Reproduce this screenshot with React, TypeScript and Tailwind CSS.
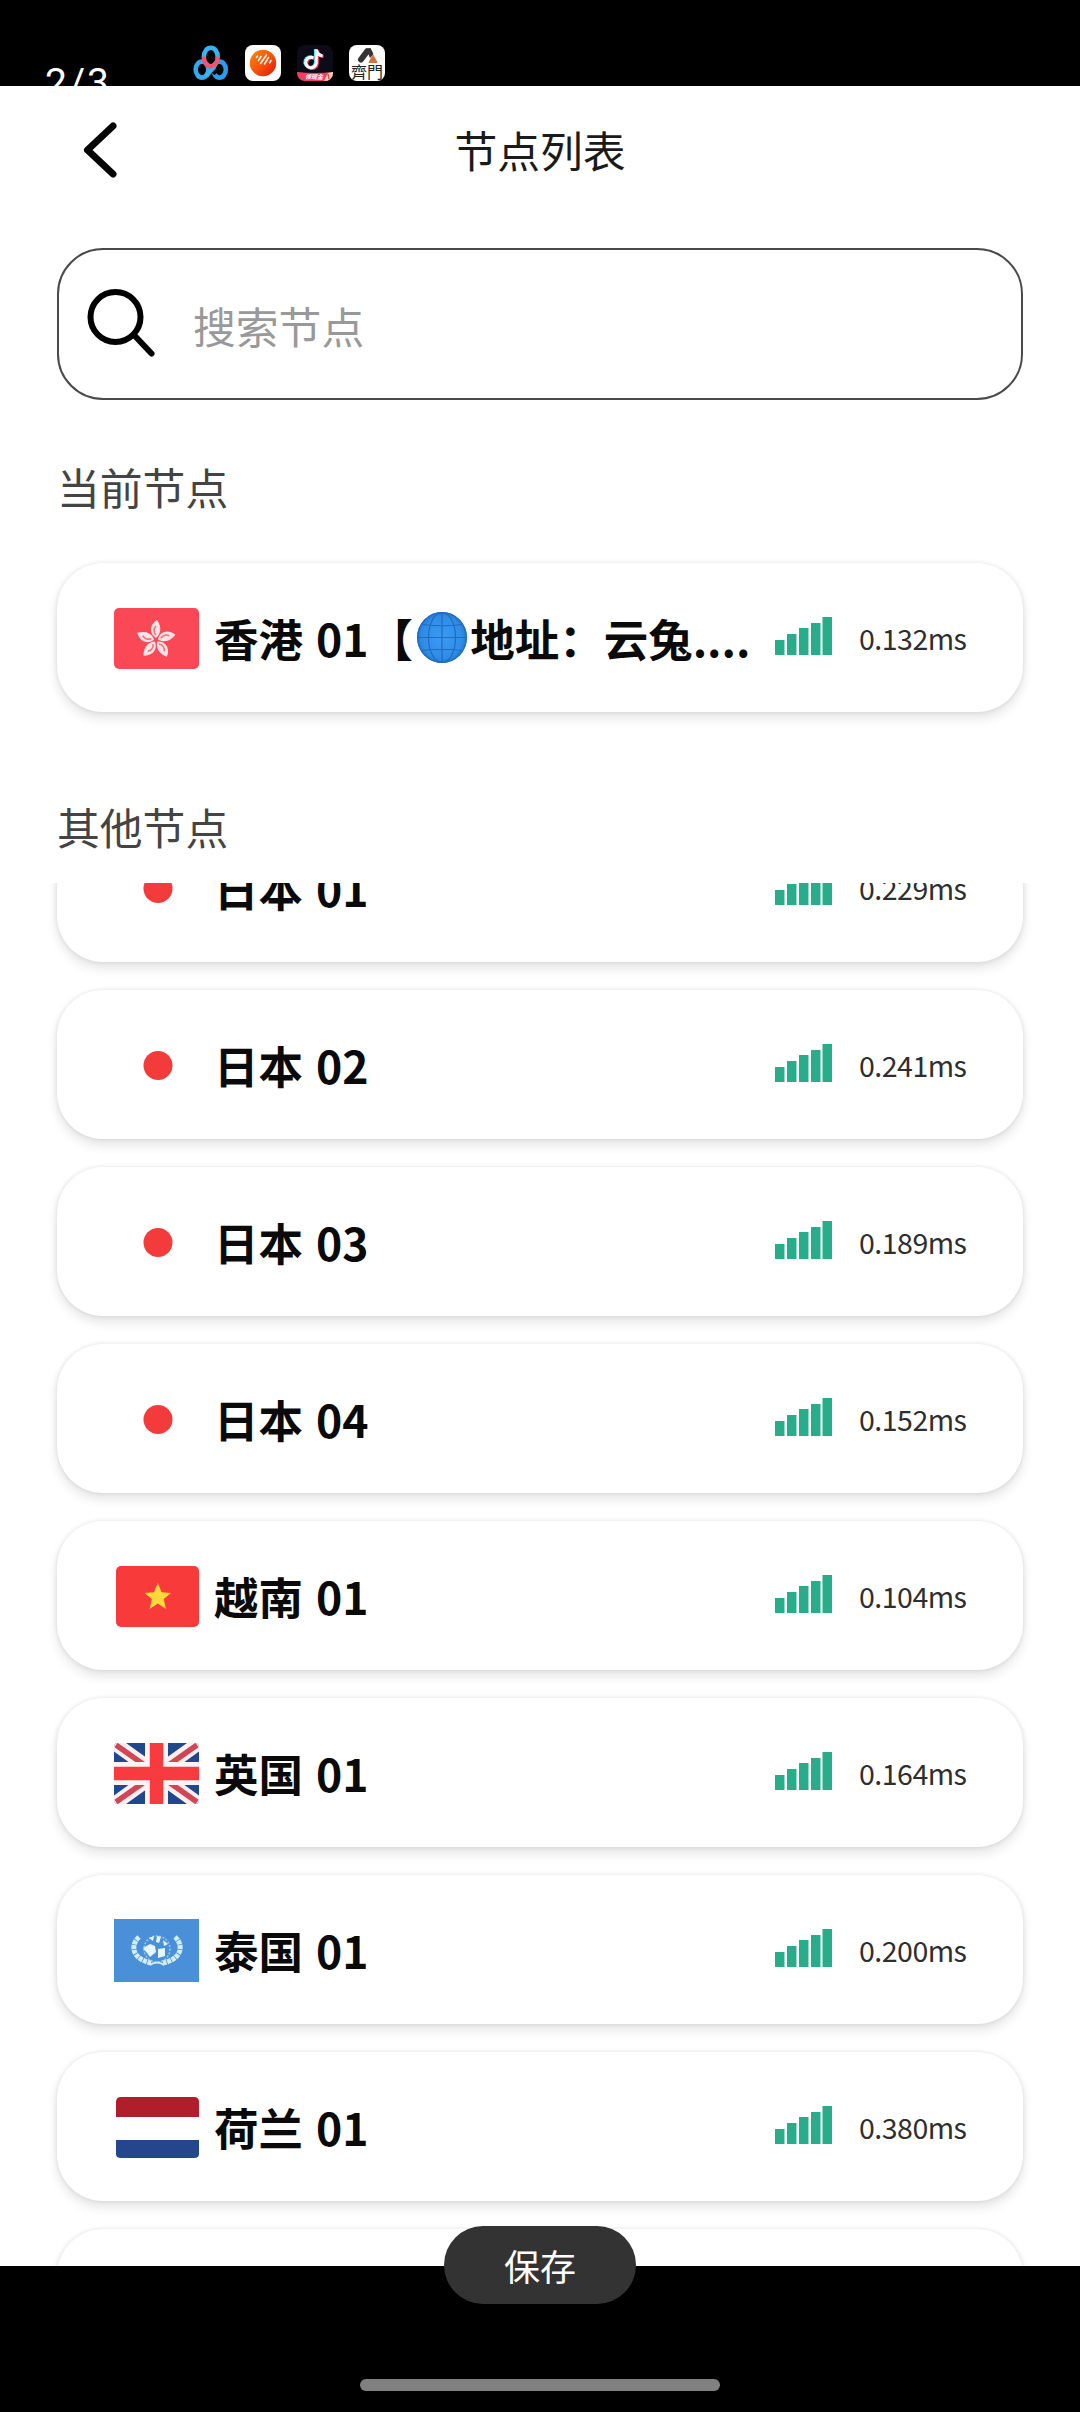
import type { ReactNode } from "react";

const HongKongFlag = () => (
  <svg viewBox="0 0 85 61" className="h-[61px] w-[85px]">
    <rect width="85" height="61" rx="5" fill="#fb4857" />
    {[0, 72, 144, 216, 288].map((a) => (
      <g key={a} transform={`translate(42 32) rotate(${a})`}>
        <path d="M0 -2C-7 -6 -7 -15 1 -20C4 -16 7 -8 0 -2Z" fill="#fde3e6" />
        <path d="M0 -5C-3 -8 -2 -12 0 -14" fill="none" stroke="#f2707c" strokeWidth="1.6" />
      </g>
    ))}
  </svg>
);

const JapanFlag = () => (
  <svg viewBox="0 0 85 61" className="h-[61px] w-[85px]">
    <circle cx="44" cy="30.5" r="14.5" fill="#f23b3a" />
  </svg>
);

const VietnamFlag = () => (
  <svg viewBox="0 0 85 61" className="h-[61px] w-[85px]">
    <rect x="2" width="83" height="61" rx="5" fill="#f93a3b" />
    <path
      d="M43.800 17L47.600 26.200L57 27L49.700 33L52 43L43.800 37.600L35.600 43L37.900 33L30.600 27L40 26.200Z"
      fill="#ffd93b"
    />
  </svg>
);

const UKFlag = () => (
  <svg viewBox="0 0 85 61" className="h-[61px] w-[85px]">
    <clipPath id="uk">
      <rect width="85" height="61" rx="4" />
    </clipPath>
    <g clipPath="url(#uk)">
      <rect width="85" height="61" fill="#21478c" />
      <path d="M0 0L85 61M85 0L0 61" stroke="#fdeef2" strokeWidth="14" />
      <path d="M2 2L36 26M83 2L49 26M2 59L36 35M83 59L49 35" stroke="#cf4654" strokeWidth="5.500" />
      <path d="M42.500 0V61M0 30.500H85" stroke="#fdf3f5" strokeWidth="23" />
      <path d="M42.500 0V61M0 30.500H85" stroke="#f83b3e" strokeWidth="13.500" />
    </g>
  </svg>
);

const UNFlag = () => (
  <svg viewBox="0 0 85 63" className="h-[63px] w-[85px]">
    <rect width="85" height="63" fill="#4a90d9" />
    <g fill="none" stroke="#d3ecf6">
      <path d="M25 18C16 26 18 40 37 44" strokeWidth="5" strokeDasharray="4 .8" />
      <path d="M61 18C70 26 68 40 49 44" strokeWidth="5" strokeDasharray="4 .8" />
      <path d="M36 46Q43 41 50 46" strokeWidth="2" />
      <circle cx="43" cy="30" r="13" strokeWidth="1.500" strokeDasharray="2 1.500" opacity=".6" />
    </g>
    <path
      d="M29 29L36 25L41 27L42 33L36 38L33 34ZM44 30L51 29L51 37L44 39ZM35 19L40 17L39 22ZM43 17L47 18L45 24L42 23ZM49 21L54 25L50 27Z"
      fill="#e6f6fa"
    />
  </svg>
);

const NetherlandsFlag = () => (
  <svg viewBox="0 0 85 61" className="h-[61px] w-[85px]">
    <path d="M2 20V5Q2 0 7 0H80Q85 0 85 5V20Z" fill="#b01e2b" />
    <path d="M2 43H85V57Q85 61 80 61H7Q2 61 2 57Z" fill="#23468c" />
  </svg>
);

const Globe = () => (
  <svg viewBox="0 0 50 51" className="h-[51px] w-[50px] shrink-0">
    <defs>
      <radialGradient id="globe">
        <stop offset="0" stopColor="#3a9af5" />
        <stop offset=".8" stopColor="#2f8de8" />
        <stop offset="1" stopColor="#2479cf" />
      </radialGradient>
    </defs>
    <ellipse cx="25" cy="25.500" rx="25" ry="25.500" fill="url(#globe)" />
    <g fill="none" stroke="#1f6dbd" strokeWidth="1.200">
      <path d="M25 0V51M0 25.500H50M5 12.500Q25 15 45 12.500M5 38.500Q25 36 45 38.500" />
      <ellipse cx="25" cy="25.500" rx="13.500" ry="25" />
      <ellipse cx="25" cy="25.500" rx="24.300" ry="24.800" />
    </g>
  </svg>
);

const Signal = () => (
  <svg viewBox="0 0 57 38" className="mb-[3px] h-[38px] w-[57px] shrink-0" fill="#27ad89">
    <rect x="0" y="23" width="9.500" height="15" />
    <rect x="12" y="17" width="9.500" height="21" />
    <rect x="24" y="11" width="9.500" height="27" />
    <rect x="36" y="6" width="9.500" height="32" />
    <rect x="47.500" y="0" width="9.500" height="38" />
  </svg>
);

const NetdiskIcon = () => (
  <svg viewBox="0 0 36 36" className="size-9">
    <g fill="none" strokeWidth="4.600">
      <ellipse cx="9" cy="24.600" rx="6.300" ry="8" stroke="#35a9ee" />
      <ellipse cx="26.500" cy="24.600" rx="6.300" ry="8" stroke="#2b9cf0" />
      <path d="M13 31L22 20" stroke="#3bb4ee" strokeWidth="5" />
      <path d="M20 29L24 25" stroke="#000" strokeWidth="3.500" />
      <ellipse cx="17.800" cy="12" rx="4.500" ry="6.500" fill="#000" stroke="none" />
      <path d="M10.800 12.500C10.800 -0.500 24.800 -0.500 24.800 12.500" stroke="#37b4f0" />
      <path d="M10.800 11.500C10.800 24.500 24.800 24.500 24.800 11.500" stroke="#ef5573" />
    </g>
  </svg>
);

const MusicIcon = () => (
  <svg viewBox="0 0 36 36" className="size-9">
    <defs>
      <linearGradient id="orange" x1="0" y1="0" x2="1" y2="1">
        <stop offset="0" stopColor="#fb8a0c" />
        <stop offset=".55" stopColor="#f4500c" />
        <stop offset="1" stopColor="#e80e05" />
      </linearGradient>
    </defs>
    <rect width="36" height="36" rx="8" fill="#fff" />
    <circle cx="18" cy="18" r="13.200" fill="url(#orange)" />
    <path
      d="M11.500 12.500L12.500 11M13.500 15.500L16 11.500M15.500 18.500L21.500 10M19.500 19L22 15M22.500 14L23.500 12.500M24.500 18L26 15.500"
      stroke="#fff"
      strokeWidth="1.500"
      strokeLinecap="round"
    />
  </svg>
);

const TikTokIcon = () => (
  <svg viewBox="0 0 36 36" className="size-9">
    <clipPath id="tt">
      <rect width="36" height="36" rx="8" />
    </clipPath>
    <g clipPath="url(#tt)">
      <rect width="36" height="36" fill="#0c0b18" />
      <g fill="none" strokeWidth="3">
        <path d="M16.500 12.800A5.300 5.300 0 1 0 19.300 18V4.500C19.800 8.500 22 10.500 25.500 10.800" stroke="#25e5e0" transform="translate(-.9 -.4)" />
        <path d="M16.500 12.800A5.300 5.300 0 1 0 19.300 18V4.500C19.800 8.500 22 10.500 25.500 10.800" stroke="#f33b63" transform="translate(1.100 .8)" />
        <path d="M16.500 12.800A5.300 5.300 0 1 0 19.300 18V4.500C19.800 8.500 22 10.500 25.500 10.800" stroke="#fff" />
      </g>
      <path d="M0 27Q18 29 36 27V36H0Z" fill="#ef4064" />
      <path d="M27 36L31 28L36 27V33L33 36Z" fill="#fbd7bc" />
      <path d="M31 29L32 34" stroke="#d9503a" strokeWidth="1.500" />
      <text x="8" y="34" fontSize="6" fontStyle="italic" fontWeight="700" fill="#fff" fontFamily="'Noto Sans CJK SC', sans-serif">
        领现金
      </text>
    </g>
  </svg>
);

const QimenIcon = () => (
  <svg viewBox="0 0 36 36" className="size-9">
    <rect width="36" height="36" rx="8" fill="#fff" />
    <path d="M12 14.500L18 6.500" stroke="#343434" strokeWidth="6" strokeLinecap="round" />
    <path d="M17 3.500L21.500 3L24.500 9L21 13Z" fill="#343434" />
    <path d="M24 10L28 17.500H20Z" fill="#d8703a" stroke="#d8703a" strokeWidth="1" />
    <text x="2" y="33" fontSize="16" fill="#222" fontFamily="'Noto Sans CJK TC', sans-serif">
      齊門
    </text>
  </svg>
);

function NodeCard({ flag, name, ms }: { flag: ReactNode; name: ReactNode; ms: string }) {
  return (
    <div className="mx-[57px] flex h-[149px] shrink-0 items-center rounded-[46px] bg-white pl-[57px] pr-[55px] shadow-[0_6px_12px_rgba(0,0,0,0.11),0_0_4px_rgba(0,0,0,0.10)]">
      <div className="mt-0.5 flex w-[85px] shrink-0 items-center">{flag}</div>
      <div className="ml-[15px] flex flex-1 items-center whitespace-pre text-[44.500px] font-bold leading-[60px] text-[#0a0a0a] [word-spacing:3px]">
        {name}
      </div>
      <Signal />
      <div className="ml-[27px] w-[109px] whitespace-nowrap text-[28.500px] leading-9 tracking-[-0.5px] text-[#2e2e2e]">{ms}</div>
    </div>
  );
}

const nodes: { flag: ReactNode; name: string; ms: string }[] = [
  { flag: <JapanFlag />, name: "日本 01", ms: "0.229ms" },
  { flag: <JapanFlag />, name: "日本 02", ms: "0.241ms" },
  { flag: <JapanFlag />, name: "日本 03", ms: "0.189ms" },
  { flag: <JapanFlag />, name: "日本 04", ms: "0.152ms" },
  { flag: <VietnamFlag />, name: "越南 01", ms: "0.104ms" },
  { flag: <UKFlag />, name: "英国 01", ms: "0.164ms" },
  { flag: <UNFlag />, name: "泰国 01", ms: "0.200ms" },
  { flag: <NetherlandsFlag />, name: "荷兰 01", ms: "0.380ms" },
];

export default function App() {
  return (
    <div className="relative flex h-[2412px] w-[1080px] flex-col overflow-hidden bg-black font-['Noto_Sans_CJK_SC',sans-serif]">
      <div className="flex h-[86px] shrink-0 overflow-hidden">
        <div className="ml-[45px] mt-[60px] w-[148px] font-[Roboto] text-[39px] leading-[46px] tracking-[2px] text-white">
          2/3
        </div>
        <div className="mt-[45px] flex gap-4">
          <NetdiskIcon />
          <MusicIcon />
          <TikTokIcon />
          <QimenIcon />
        </div>
      </div>

      <div className="flex h-[2180px] shrink-0 flex-col overflow-hidden bg-white">
        <header className="flex h-[128px] shrink-0 items-center">
          <svg viewBox="0 0 36 60" className="ml-[82px] h-[60px] w-9">
            <path d="M31 6L5.500 30L31 54" fill="none" stroke="#050505" strokeWidth="7" strokeLinecap="round" strokeLinejoin="round" />
          </svg>
          <h1 className="mb-[3px] mr-[118px] flex-1 text-center text-[42.800px] leading-[60px] text-[#1a1a1a]">节点列表</h1>
        </header>

        <div className="mx-[57px] mt-[34px] flex h-[152px] shrink-0 items-center rounded-[46px] border-2 border-[#4a4a4a]">
          <svg viewBox="0 0 72 72" className="mb-1 ml-[27px] size-[72px]" fill="none" stroke="#000">
            <circle cx="29.500" cy="31" r="25" strokeWidth="6" />
            <path d="M48 49L65.500 67.500" strokeWidth="6" strokeLinecap="round" />
          </svg>
          <span className="ml-[35px] mt-px text-[42.800px] leading-[60px] text-[#999]">搜索节点</span>
        </div>

        <h2 className="ml-[57px] mt-[56px] text-[42.800px] leading-[60px] text-[#444]">当前节点</h2>
        <div className="mt-[47px]">
          <NodeCard
            flag={<HongKongFlag />}
            name={
              <>
                <span className="mr-1">香港 01【</span>
                <Globe />
                <span className="ml-[3px]">地址：云兔</span>
                <span>....</span>
              </>
            }
            ms="0.132ms"
          />
        </div>
        <h2 className="ml-[57px] mt-[84px] text-[42.800px] leading-[60px] text-[#444]">其他节点</h2>

        <div className="mt-[27px] flex h-[1383px] shrink-0 flex-col overflow-hidden">
          <div className="-mt-[70px] flex flex-col gap-7">
            {nodes.map((n) => (
              <NodeCard key={n.name} {...n} />
            ))}
            <div className="mx-[57px] h-[149px] rounded-[46px] bg-white shadow-[0_6px_12px_rgba(0,0,0,0.11),0_0_4px_rgba(0,0,0,0.10)]" />
          </div>
        </div>
      </div>

      <div className="flex flex-1 items-end justify-center pb-[21px]">
        <div className="h-3 w-[360px] rounded-full bg-[#808080]" />
      </div>

      <button className="absolute left-[444px] top-[2226px] flex h-[78px] w-48 items-center justify-center rounded-full bg-[#333] text-[36px] leading-[54px] text-white">
        保存
      </button>
    </div>
  );
}
